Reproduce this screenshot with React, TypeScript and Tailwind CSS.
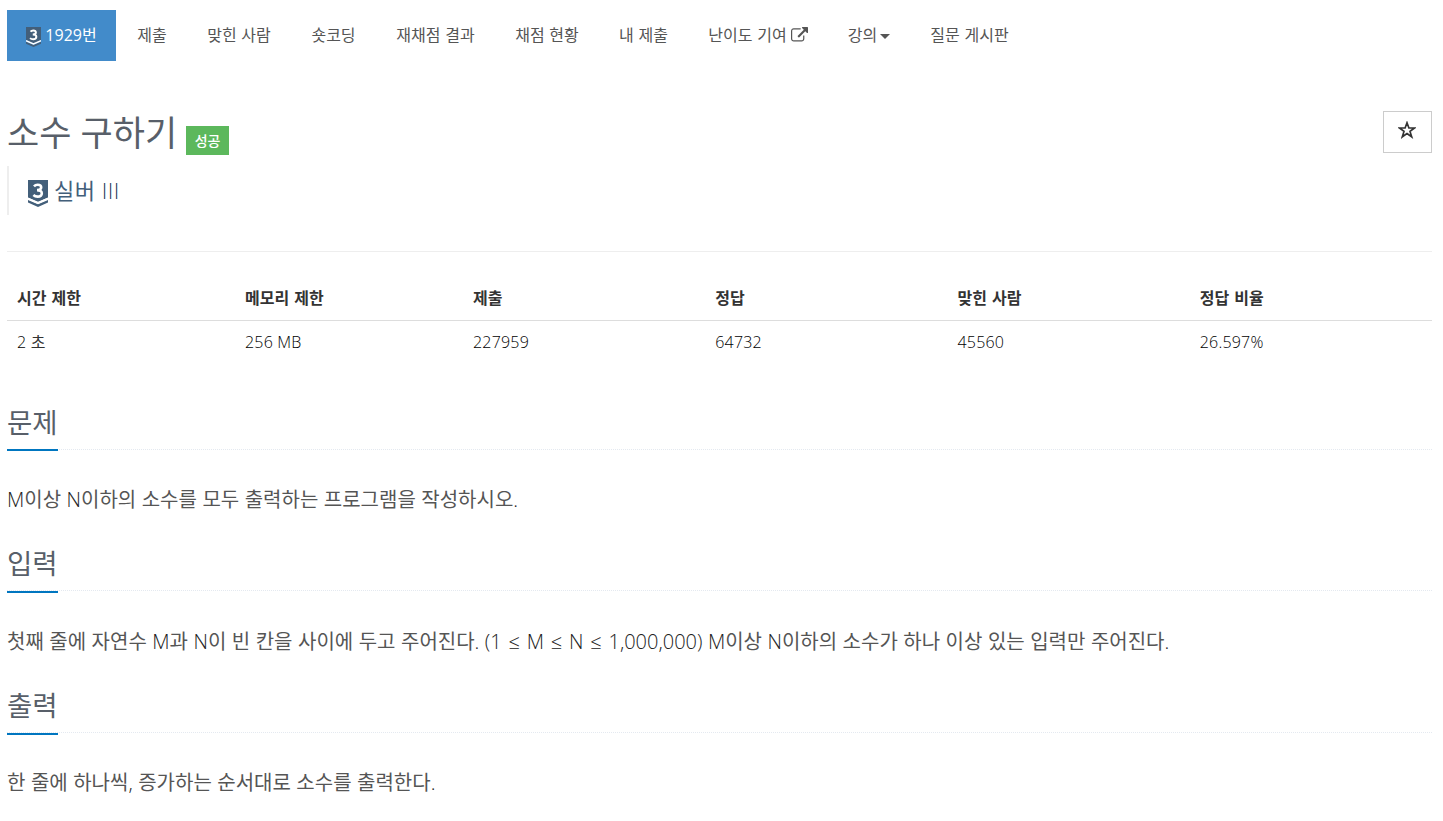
import clsx from 'clsx'
import type { ReactNode } from 'react'

interface TierBadgeProps {
  className?: string
}

const TierBadge = ({ className }: TierBadgeProps) => (
  <svg viewBox="0 0 20 27" preserveAspectRatio="none" className={className} fill="none">
    <path d="M0 0h20v17.5L10 22 0 17.500z" fill="#435F7A" />
    <path d="M0 20l10 4.300 10-4.300v2.500L10 27 0 22.500z" fill="#435F7A" />
    <path d="M0 18.500l10 4.400 10-4.400" stroke="#fff" strokeWidth="1.800" />
    <path
      d="M6 6.300Q7.400 4.700 9.600 4.700c2.300 0 3.600 1 3.600 2.600 0 1.800-1.400 2.800-4.200 2.800 3.100 0 4.800 1.100 4.800 3.100 0 2.100-1.600 3.400-4.200 3.400q-2.500 0-4.200-1.600"
      stroke="#fff"
      strokeWidth="2.600"
    />
  </svg>
)

const ExternalLinkIcon = () => (
  <svg viewBox="0 0 1792 1792" className="ml-1 size-[17px]" fill="currentColor">
    <path d="M1408 928v320q0 119-84.500 203.500T1120 1536H288q-119 0-203.500-84.500T0 1248V416q0-119 84.500-203.500T288 128h704q14 0 23 9t9 23v64q0 14-9 23t-23 9H288q-66 0-113 47t-47 113v832q0 66 47 113t113 47h832q66 0 113-47t47-113V928q0-14 9-23t23-9h64q14 0 23 9t9 23zm384-864v512q0 26-19 45t-45 19-45-19l-176-176-652 652q-10 10-23 10t-23-10L695 983q-10-10-10-23t10-23l652-652-176-176q-19-19-19-45t19-45 45-19h512q26 0 45 19t19 45z" />
  </svg>
)

const CaretIcon = () => (
  <svg viewBox="0 0 10 5" className="mt-0.5 ml-[3px] h-[5px] w-2.5" fill="currentColor">
    <path d="M0 0h10L5 5z" />
  </svg>
)

const StarIcon = () => (
  <svg viewBox="0 0 18 18" className="mr-0.5 mb-1 size-[18px]" fill="none" stroke="currentColor">
    <path
      d="M9 1.800l1.900 5.200h5.600l-4.500 3.400 1.700 5.400L9 12.500l-4.700 3.300L6 10.400 1.500 7h5.600z"
      strokeWidth="1.700"
    />
  </svg>
)

const menu: { label: string; width: string; icon?: ReactNode }[] = [
  { label: '제출', width: 'w-[70px]' },
  { label: '맞힌 사람', width: 'w-[104px]' },
  { label: '숏코딩', width: 'w-[85px]' },
  { label: '재채점 결과', width: 'w-[119px]' },
  { label: '채점 현황', width: 'w-[104px]' },
  { label: '내 제출', width: 'w-[89px]' },
  { label: '난이도 기여', width: 'w-[140px]', icon: <ExternalLinkIcon /> },
  { label: '강의', width: 'w-[82px]', icon: <CaretIcon /> },
  { label: '질문 게시판', width: 'w-[119px]' },
]

const info = [
  { label: '시간 제한', value: '2 초' },
  { label: '메모리 제한', value: '256 MB' },
  { label: '제출', value: '227959' },
  { label: '정답', value: '64732' },
  { label: '맞힌 사람', value: '45560' },
  { label: '정답 비율', value: '26.597%' },
]

const sections = [
  { title: '문제', body: 'M이상 N이하의 소수를 모두 출력하는 프로그램을 작성하시오.' },
  {
    title: '입력',
    body: '첫째 줄에 자연수 M과 N이 빈 칸을 사이에 두고 주어진다. (1 ≤ M ≤ N ≤ 1,000,000) M이상 N이하의 소수가 하나 이상 있는 입력만 주어진다.',
  },
  { title: '출력', body: '한 줄에 하나씩, 증가하는 순서대로 소수를 출력한다.' },
]

interface MixedTextProps {
  text: string
  latinClassName?: string
}

// Latin letters and digits are set light, Hangul keeps the regular weight
const MixedText = ({ text, latinClassName }: MixedTextProps) =>
  text.split(/([A-Za-z0-9.,()≤%]+)/).map((part, i) => (
    <span
      key={i}
      className={clsx(
        i % 2 === 1 && ['font-light', latinClassName],
        part === '≤' && 'mx-[1.300px]',
      )}
    >
      {part}
    </span>
  ))

const ProblemMenu = () => (
  <nav className="flex h-[51px] pb-px text-base text-[#555]">
    <a className="mr-px -mb-px flex w-[109px] items-center justify-center gap-1 bg-[#428bca] text-white">
      <TierBadge className="mt-0.5 h-5 w-[15px]" />
      <span className="pb-px">1929번</span>
    </a>
    {menu.map(({ label, width, icon }) => (
      <a
        key={label}
        className={clsx('flex items-center justify-center [word-spacing:0.500px]', width)}
      >
        {label}
        {icon}
      </a>
    ))}
  </nav>
)

export default function App() {
  return (
    <main className="h-[821px] overflow-hidden bg-white pt-2.5 pr-[11px] pl-[7px] font-['Open_Sans','Noto_Sans_CJK_KR',sans-serif] whitespace-nowrap text-[#333]">
      <ProblemMenu />

      <header className="flex h-[191px] justify-between border-b border-[#eee] pt-[50px]">
        <div>
          <div className="flex h-[55px] items-start">
            <h1 className="text-[35px] leading-[44px] text-[#585f69]">소수 구하기</h1>
            <span className="mt-[15px] ml-[9px] flex h-[29px] w-[43px] items-center justify-center bg-[#5cb85c] text-sm font-medium text-white">
              성공
            </span>
          </div>
          <blockquote className="flex h-[49px] items-center border-l-2 border-[#eee] pl-[19px] text-[22px] text-[#435f7a]">
            <TierBadge className="mt-1.5 mr-1.5 h-[27px] w-5" />
            <span className="pb-px tracking-[0.500px]">
              <MixedText text="실버 III" latinClassName="text-[#24405b]" />
            </span>
          </blockquote>
        </div>
        <button className="flex h-[42px] w-[49px] items-center justify-center border border-[#ccc]">
          <StarIcon />
        </button>
      </header>

      <table className="mt-6 w-full table-fixed text-left text-base">
        <colgroup>
          <col className="w-[16%]" />
          <col className="w-[16%]" />
          <col className="w-[17%]" />
          <col className="w-[17%]" />
          <col className="w-[17%]" />
          <col className="w-[17%]" />
        </colgroup>
        <thead>
          <tr className="h-11 border-b border-[#ddd]">
            {info.map(({ label }) => (
              <th key={label} className="px-2.5 font-bold [word-spacing:1px]">
                {label}
              </th>
            ))}
          </tr>
        </thead>
        <tbody>
          <tr className="h-[42px]">
            {info.map(({ label, value }) => (
              <td key={label} className="px-2.5 pt-px tracking-[0.200px]">
                <MixedText text={value} latinClassName="text-black" />
              </td>
            ))}
          </tr>
        </tbody>
      </table>

      <div className="mt-[37px]">
        {sections.map(({ title, body }, i) => (
          <section key={title} className={i === 1 ? 'h-[142px]' : 'h-[141px]'}>
            <div className="flex h-[51px] border-b border-dotted border-[#e4e9f0]">
              <h2
                className={clsx(
                  'border-b-2 border-[#0076c0] text-[27.500px] leading-[47px] text-[#585f69]',
                  i === 0 ? 'h-[52px]' : 'h-[53px]',
                )}
              >
                {title}
              </h2>
            </div>
            <p
              className={clsx(
                'text-xl leading-[30px] text-[#555] [word-spacing:0.300px]',
                i === 1 ? 'pt-9' : 'pt-[35px]',
              )}
            >
              <MixedText text={body} latinClassName="text-[#222]" />
            </p>
          </section>
        ))}
      </div>
    </main>
  )
}
